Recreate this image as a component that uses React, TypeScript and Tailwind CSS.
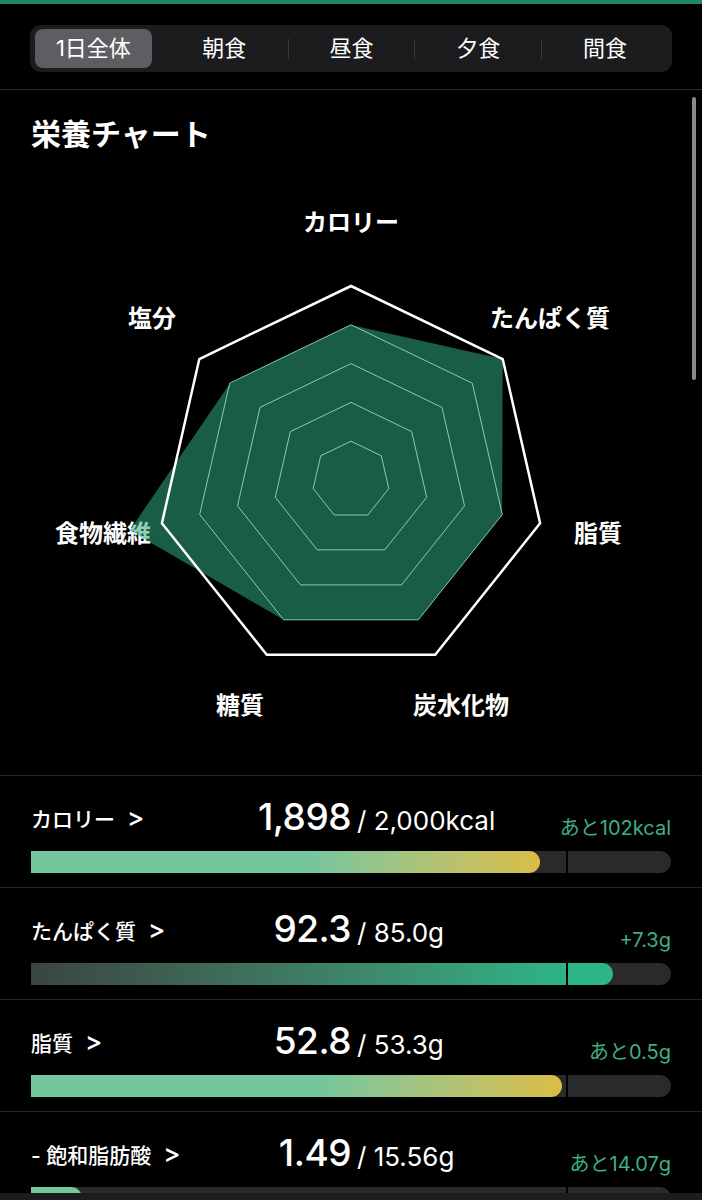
const R = 194;
const CX = 351;
const CY = 310;

const axes = [
  { label: 'カロリー', x: 351, y: 50 },
  { label: 'たんぱく質', x: 550, y: 146 },
  { label: '脂質', x: 598, y: 361 },
  { label: '炭水化物', x: 461, y: 533 },
  { label: '糖質', x: 240, y: 533 },
  { label: '食物繊維', x: 103, y: 361 },
  { label: '塩分', x: 152, y: 146 },
];

// radius per axis, clockwise from カロリー
const data = [155, 194, 155, 155, 155, 227, 155];

function point(k: number, r: number) {
  const a = ((-90 + (k * 360) / 7) * Math.PI) / 180;
  return [CX + r * Math.cos(a), CY + r * Math.sin(a)];
}

function poly(rs: number[]) {
  return rs.map((r, k) => point(k, r).map((v) => v.toFixed(1)).join(',')).join(' ');
}

const rows = [
  { label: 'カロリー', value: '1,898', target: '2,000kcal', rest: 'あと102kcal', pct: 1898 / 2000, kind: 'under' },
  { label: 'たんぱく質', value: '92.3', target: '85.0g', rest: '+7.3g', pct: 92.3 / 85, kind: 'over' },
  { label: '脂質', value: '52.8', target: '53.3g', rest: 'あと0.5g', pct: 52.8 / 53.3, kind: 'under' },
  { label: '- 飽和脂肪酸', value: '1.49', target: '15.56g', rest: 'あと14.07g', pct: 1.49 / 15.56, kind: 'low' },
];

const FULL = 536; // px for 100%

function RadarChart() {
  return (
    <svg width="702" height="605" viewBox="0 0 702 605" className="block">
      {axes.map((a) => (
        <text
          key={a.label}
          x={a.x}
          y={a.y}
          textAnchor="middle"
          dominantBaseline="central"
          fill="#ffffff"
          fontSize="24"
          fontWeight="700"
          fontFamily="'Noto Sans CJK JP', sans-serif"
        >
          {a.label}
        </text>
      ))}
      <polygon points={poly(data)} fill="rgb(46,170,128)" fillOpacity="0.55" />
      {[1, 2, 3, 4].map((i) => (
        <polygon
          key={i}
          points={poly(Array(7).fill((R * i) / 5))}
          fill="none"
          stroke="#86cfae"
          strokeWidth="1"
        />
      ))}
      <polygon points={poly(Array(7).fill(R))} fill="none" stroke="#ffffff" strokeWidth="2.5" />
    </svg>
  );
}

function Bar({ pct, kind }: { pct: number; kind: string }) {
  const w = Math.round(pct * FULL);
  return (
    <div className="relative mt-[16px] h-[22px] w-full overflow-hidden rounded-r-full bg-[#2a2a2a]">
      {kind === 'under' && (
        <div
          className="h-full rounded-r-full bg-linear-to-r from-[#74c69d] from-55% to-[#dabd43]"
          style={{ width: w }}
        />
      )}
      {kind === 'over' && (
        <div
          className="h-full rounded-r-full bg-linear-to-r from-[#3a4540] to-[#2cb586] to-92%"
          style={{ width: w }}
        />
      )}
      {kind === 'low' && (
        <div className="h-full rounded-r-full bg-[#74c69d]" style={{ width: w }} />
      )}
      <div className="absolute top-0 left-[535px] h-full w-[2px] bg-black" />
    </div>
  );
}

export default function App() {
  const tabs = ['朝食', '昼食', '夕食', '間食'];
  return (
    <div className="relative h-[1200px] w-full overflow-hidden bg-black text-white font-['Inter','Noto_Sans_CJK_JP',sans-serif]">
      <div className="h-[4px] bg-[#1f8a5f]" />

      <div className="border-b border-[#2a2a2a] px-[30px] pt-[21px] pb-[17px]">
        <div className="flex h-[47px] items-center rounded-[11px] bg-[#1c1c1e] p-[4px]">
          <div className="flex h-full flex-1 items-center">
            <div className="ml-[1px] mr-[9px] flex h-full flex-1 items-center justify-center rounded-[8px] bg-[#5e5e62] text-[22px]">
              1日全体
            </div>
          </div>
          {tabs.map((t, i) => (
            <div key={t} className="flex h-full flex-1 items-center">
              {i > 0 && <div className="h-[20px] w-px bg-[#3a3a3c]" />}
              <div className="flex flex-1 items-center justify-center text-[22px]">{t}</div>
            </div>
          ))}
        </div>
      </div>

      <div className="px-[31px] pt-[26px]">
        <h2 className="h-[36px] text-[30px] font-bold leading-[36px]">栄養チャート</h2>
      </div>
      <div className="mt-[18px]">
        <RadarChart />
      </div>

      {rows.map((r) => (
        <div key={r.label} className="border-t border-[#262626] px-[31px] pt-[22px] pb-[14px]">
          <div className="grid h-[37px] grid-cols-2 items-baseline">
            <div className="flex items-baseline justify-between">
              <span className="-translate-y-[3px] text-[21px] font-medium leading-none">
                {r.label}
                <span className="ml-[12px] text-[26px]">&gt;</span>
              </span>
              <span className="text-[37px] font-medium leading-none tracking-[-0.5px]">{r.value}</span>
            </div>
            <div className="flex items-baseline justify-between pl-[6px]">
              <span className="text-[26px] leading-none">/ {r.target}</span>
              <span className="translate-y-[5px] text-[20px] leading-none text-[#3fae80]">{r.rest}</span>
            </div>
          </div>
          <Bar pct={r.pct} kind={r.kind} />
        </div>
      ))}

      <div className="absolute top-[97px] right-[6px] h-[283px] w-[4px] rounded-full bg-[#8a8a8a]" />
      <div className="absolute top-[1193px] left-0 h-[7px] w-full bg-[#1c1c1e]" />
    </div>
  );
}
